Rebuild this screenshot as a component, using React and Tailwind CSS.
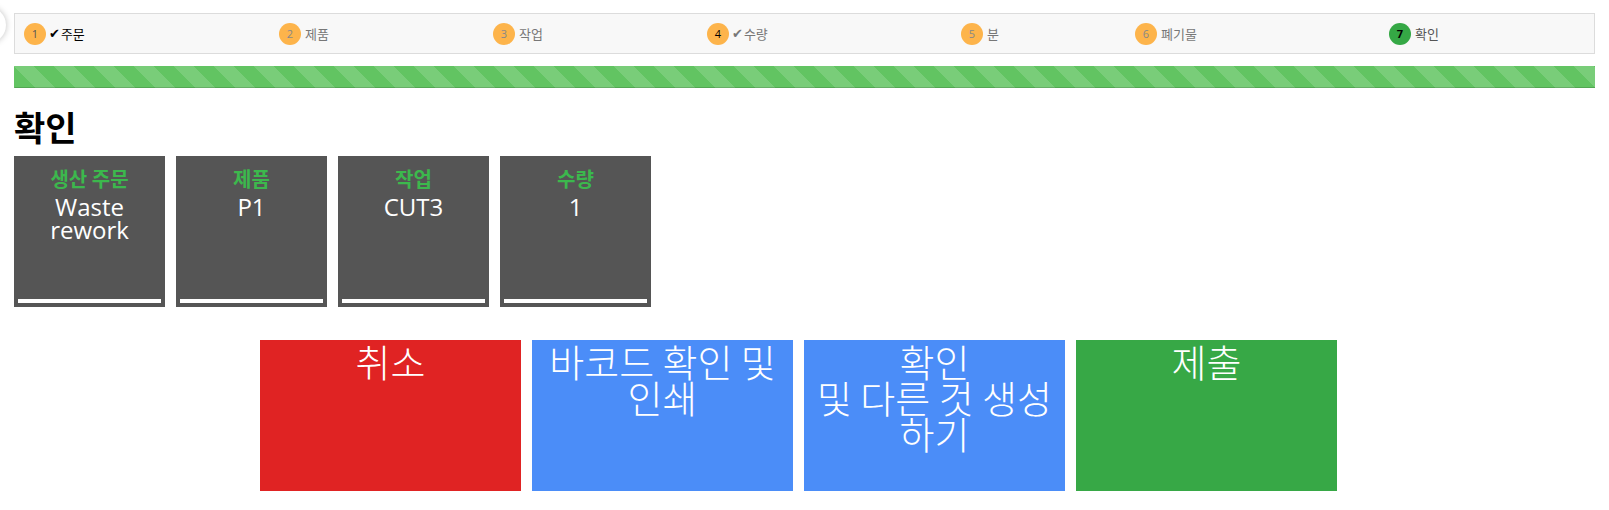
import React from "react";

const KR = { fontFamily: '"Noto Sans CJK KR", "Noto Sans", sans-serif' };
const OS = { fontFamily: '"Open Sans", "Noto Sans CJK KR", sans-serif' };

const steps = [
  { n: 1, label: "주문", check: true, numCls: "text-[#555]", labelCls: "text-black", checkCls: "text-black", circle: "bg-[#fdb44b]" },
  { n: 2, label: "제품", numCls: "text-[#888]", labelCls: "text-[#777]", circle: "bg-[#fdb44b]" },
  { n: 3, label: "작업", numCls: "text-[#888]", labelCls: "text-[#777]", circle: "bg-[#fdb44b]" },
  { n: 4, label: "수량", check: true, numCls: "text-black", labelCls: "text-[#777]", checkCls: "text-[#777]", circle: "bg-[#fdb44b]" },
  { n: 5, label: "분", numCls: "text-[#888]", labelCls: "text-[#777]", circle: "bg-[#fdb44b]" },
  { n: 6, label: "폐기물", numCls: "text-[#888]", labelCls: "text-[#777]", circle: "bg-[#fdb44b]" },
  { n: 7, label: "확인", numCls: "text-black font-bold", labelCls: "text-[#555]", circle: "bg-[#35a845]" },
];

const cards = [
  { label: "생산 주문", value: ["Waste", "rework"] },
  { label: "제품", value: ["P1"] },
  { label: "작업", value: ["CUT3"] },
  { label: "수량", value: ["1"] },
];

export default function App() {
  return (
    <div className="relative min-h-[510px] bg-white px-[14px] pt-[13px]" style={KR}>
      <div className="absolute left-[-38px] top-[7px] h-[36px] w-[44px] rounded-full bg-white shadow-[0_0_6px_rgba(0,0,0,0.25)]" />

      <div className="grid h-[41px] grid-cols-[255px_214px_214px_254px_174px_254px_1fr] items-center border border-[#dcdcdc] bg-[#f8f8f8] pl-[9px]">
        {steps.map((s) => (
          <div key={s.n} className="flex items-center">
            <span
              className={`flex h-[22px] w-[22px] items-center justify-center rounded-full text-[11px] leading-none ${s.circle} ${s.numCls}`}
              style={OS}
            >
              {s.n}
            </span>
            {s.check && (
              <span className={`ml-[3px] text-[13px] leading-none ${s.checkCls}`} style={{ fontFamily: '"DejaVu Sans", sans-serif' }}>
                ✔
              </span>
            )}
            <span className={`text-[13px] leading-none ${s.check ? "ml-[1px]" : "ml-[4px]"} ${s.labelCls}`}>{s.label}</span>
          </div>
        ))}
      </div>

      <div
        className="mt-[12px] h-[22px] bg-[#62c462] shadow-[inset_0_-1px_0_rgba(0,0,0,0.15)]"
        style={{
          backgroundImage:
            "linear-gradient(45deg, rgba(255,255,255,0.15) 25%, transparent 25%, transparent 50%, rgba(255,255,255,0.15) 50%, rgba(255,255,255,0.15) 75%, transparent 75%, transparent)",
          backgroundSize: "40px 40px",
        }}
      />

      <h1 className="mt-[19px] mb-[9px] text-[34px] font-bold leading-[40px] text-black">확인</h1>

      <div className="flex gap-[11px]">
        {cards.map((c) => (
          <div key={c.label} className="relative h-[151px] w-[151px] bg-[#555555] pt-[11px] text-center">
            <div className="text-[20px] font-bold leading-[24px] text-[#3cb84d]">{c.label}</div>
            <div className="mt-[4px] text-[24px] leading-[23px] text-white" style={OS}>
              {c.value.map((v) => (
                <div key={v}>{v}</div>
              ))}
            </div>
            <div className="absolute bottom-[4px] left-[4px] right-[4px] h-[4px] bg-white" />
          </div>
        ))}
      </div>

      <div className="mt-[33px] flex justify-center pr-[1px]">
        {[
          { cls: "bg-[#e02323]", lines: ["취소"] },
          { cls: "bg-[#4b8df8]", lines: ["바코드 확인 및", "인쇄"] },
          { cls: "bg-[#4b8df8]", lines: ["확인", "및 다른 것 생성", "하기"] },
          { cls: "bg-[#37a846]", lines: ["제출"] },
        ].map((b, i) => (
          <div
            key={i}
            className={`mr-[11px] h-[151px] w-[261px] pt-[3px] text-center text-[38px] font-light leading-[36px] whitespace-nowrap text-white ${b.cls}`}
          >
            {b.lines.map((l) => (
              <div key={l}>{l}</div>
            ))}
          </div>
        ))}
      </div>
    </div>
  );
}
